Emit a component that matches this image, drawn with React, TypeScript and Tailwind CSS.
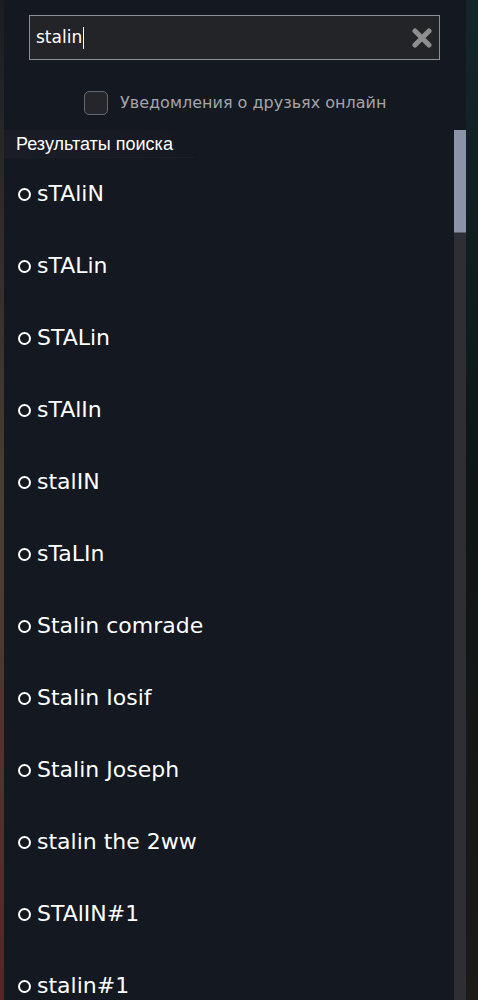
import React from "react";

const results = [
  "sTAliN",
  "sTALin",
  "STALin",
  "sTAlIn",
  "stalIN",
  "sTaLIn",
  "Stalin comrade",
  "Stalin Iosif",
  "Stalin Joseph",
  "stalin the 2ww",
  "STAlIN#1",
  "stalin#1",
];

export default function App() {
  return (
    <div className="w-[478px] h-[1000px] overflow-hidden flex bg-[#101417]">
      {/* left edge of the game behind the panel */}
      <div className="w-[4px] h-full bg-gradient-to-b from-[#1c1d22] via-[#4a3f33] to-[#5a2424]" />

      {/* friends panel */}
      <div className="w-[462px] h-full flex flex-col bg-[#141820] font-['DejaVu_Sans',sans-serif]">
        {/* search */}
        <div className="pt-[15px] pl-[25px] pr-[26px] shrink-0">
          <div className="h-[45px] flex items-center bg-[#232428] border border-[#8d9096] pl-[6px] pr-[7px]">
            <span className="text-[17px] text-white leading-none">stalin</span>
            <span className="w-[1px] h-[22px] bg-white ml-[1px]" />
            <div className="flex-1" />
            <svg width="20" height="20" viewBox="0 0 20 20">
              <path d="M3 3 L17 17 M17 3 L3 17" stroke="#8e8e8e" strokeWidth="5" strokeLinecap="round" />
            </svg>
          </div>
        </div>

        {/* online notifications */}
        <div className="mt-[31px] pl-[80px] flex items-center gap-[12px] shrink-0">
          <div className="w-[24px] h-[24px] rounded-[5px] border border-[#66686e] bg-[#25262b]" />
          <span className="text-[16px] text-[#a3a5aa]">Уведомления о друзьях онлайн</span>
        </div>

        {/* results */}
        <div className="mt-[15px] flex-1 flex min-h-0">
          <div className="flex-1 flex flex-col">
            <div className="h-[28px] w-[190px] shrink-0 flex items-end pb-[4px] pl-[12px] bg-gradient-to-r from-[#1a1d25] via-[#181b23] to-transparent border-b border-[#1c1f26]">
              <span className="font-['Liberation_Sans',sans-serif] text-[18px] text-white leading-none">Результаты поиска</span>
            </div>
            <div className="flex flex-col shrink-0">
              {results.map((name) => (
                <div key={name} className="h-[72px] shrink-0 flex items-center pl-[14px] gap-[6px]">
                  <span className="w-[13px] h-[13px] rounded-full border-2 border-white" />
                  <span className="text-[22px] text-white leading-none">{name}</span>
                </div>
              ))}
            </div>
          </div>
          <div className="w-[12px] h-full bg-[#2e2f34] flex flex-col">
            <div className="h-[103px] bg-[#8a93a8] border-b border-[#5c6170]" />
          </div>
        </div>
      </div>

      {/* right edge */}
      <div className="flex-1 h-full bg-gradient-to-b from-[#13272a] via-[#0d1515] to-[#1d1a18]" />
    </div>
  );
}
